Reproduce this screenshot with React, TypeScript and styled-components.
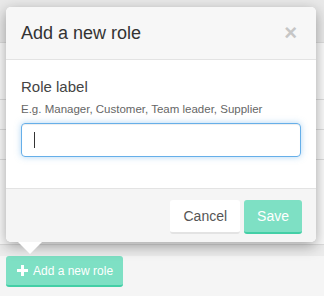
import styled, { createGlobalStyle } from 'styled-components';

const GlobalStyle = createGlobalStyle`
    html, body {
        margin: 0;
        padding: 0;
        background: #f5f5f5;
        font-family: "Liberation Sans", Arial, sans-serif;
    }
`

const rows = [42, 56, 29, 29, 84];

export default function App() {
    return (
        <>
            <GlobalStyle />
            <Page>
                <Table>
                    {rows.map((h, i) => (
                        <Row key={i} $height={h} />
                    ))}
                </Table>
                <Trigger>
                    <PlusIcon width="11" height="11" viewBox="0 0 11 11">
                        <rect x="4" y="0" width="3" height="11" fill="#fff" />
                        <rect x="0" y="4" width="11" height="3" fill="#fff" />
                    </PlusIcon>
                    Add a new role
                </Trigger>

                <Popover>
                    <Header>
                        <Title>Add a new role</Title>
                        <Close>×</Close>
                    </Header>
                    <Body>
                        <Label>Role label</Label>
                        <Hint>E.g. Manager, Customer, Team leader, Supplier</Hint>
                        <InputBox>
                            <Caret />
                        </InputBox>
                    </Body>
                    <Footer>
                        <Button>Cancel</Button>
                        <Button $primary>Save</Button>
                    </Footer>
                    <Arrow />
                </Popover>
            </Page>
        </>
    );
}

const Page = styled.div`
    position: relative;
    width: 324px;
    height: 296px;
    overflow: hidden;
`

const Table = styled.div`
    display: flex;
    flex-direction: column;
    height: 256px;
    background: #ececec;
`

const Row = styled.div<{ $height: number }>`
    height: ${p => p.$height}px;
    background: #fafafa;
    border-bottom: 1px solid #dcdcdc;

    &:first-child {
        background: #e9e9e9;
    }
`

const Trigger = styled.button`
    display: flex;
    align-items: center;
    gap: 5px;

    margin: 0 0 0 6px;
    height: 31px;
    padding: 0 10px 0 11px;

    font-family: inherit;
    font-size: 12px;
    color: #fff;

    background: #7ee0c4;
    border: none;
    border-bottom: 2px solid #43cfa6;
    border-radius: 3px;
`

const PlusIcon = styled.svg`
    display: block;
`

const Popover = styled.div`
    position: absolute;
    left: 6px;
    top: 7px;
    width: 310px;

    background: #fff;
    border-radius: 5px;
    box-shadow: 0 4px 14px rgba(0, 0, 0, 0.35);
`

const Header = styled.div`
    display: flex;
    align-items: center;
    justify-content: space-between;

    height: 52px;
    padding: 0 15px;

    background: #f7f7f7;
    border-bottom: 1px solid #e3e3e3;
    border-radius: 5px 5px 0 0;
`

const Title = styled.div`
    font-size: 18px;
    color: #333;
`

const Close = styled.div`
    font-size: 22px;
    font-weight: bold;
    line-height: 1;
    color: #c6c6c6;
    margin-right: 4px;
`

const Body = styled.div`
    display: flex;
    flex-direction: column;
    padding: 18px 15px 31px;
    background: #fff;
`

const Label = styled.div`
    font-size: 15px;
    color: #444;
    line-height: 18px;
`

const Hint = styled.div`
    margin-top: 6px;
    font-size: 11.5px;
    color: #666;
    line-height: 14px;
`

const InputBox = styled.div`
    display: flex;
    align-items: center;

    height: 32px;
    margin-top: 7px;
    padding: 0 12px;

    border: 1px solid #66afe9;
    border-radius: 4px;
    box-shadow: inset 0 1px 1px rgba(0,0,0,.075), 0 0 6px rgba(102, 175, 233, 0.5);
`

const Caret = styled.div`
    width: 1px;
    height: 16px;
    background: #333;
`

const Footer = styled.div`
    display: flex;
    justify-content: flex-end;
    gap: 4px;

    height: 54px;
    padding: 11px 14px 0;
    box-sizing: border-box;

    background: #f5f5f5;
    border-top: 1px solid #e3e3e3;
    border-radius: 0 0 5px 5px;
`

const Button = styled.button<{ $primary?: boolean }>`
    height: 34px;
    padding: 0 ${p => (p.$primary ? 13 : 13)}px;

    font-family: inherit;
    font-size: 14px;
    color: ${p => (p.$primary ? '#fff' : '#555')};

    background: ${p => (p.$primary ? '#7ee0c4' : '#fff')};
    border: none;
    border-bottom: 2px solid ${p => (p.$primary ? '#43cfa6' : '#e3e3e3')};
    border-radius: 3px;
`

const Arrow = styled.div`
    position: absolute;
    left: 12px;
    bottom: -12px;
    width: 0;
    height: 0;

    border-left: 12px solid transparent;
    border-right: 12px solid transparent;
    border-top: 12px solid #fff;
`
